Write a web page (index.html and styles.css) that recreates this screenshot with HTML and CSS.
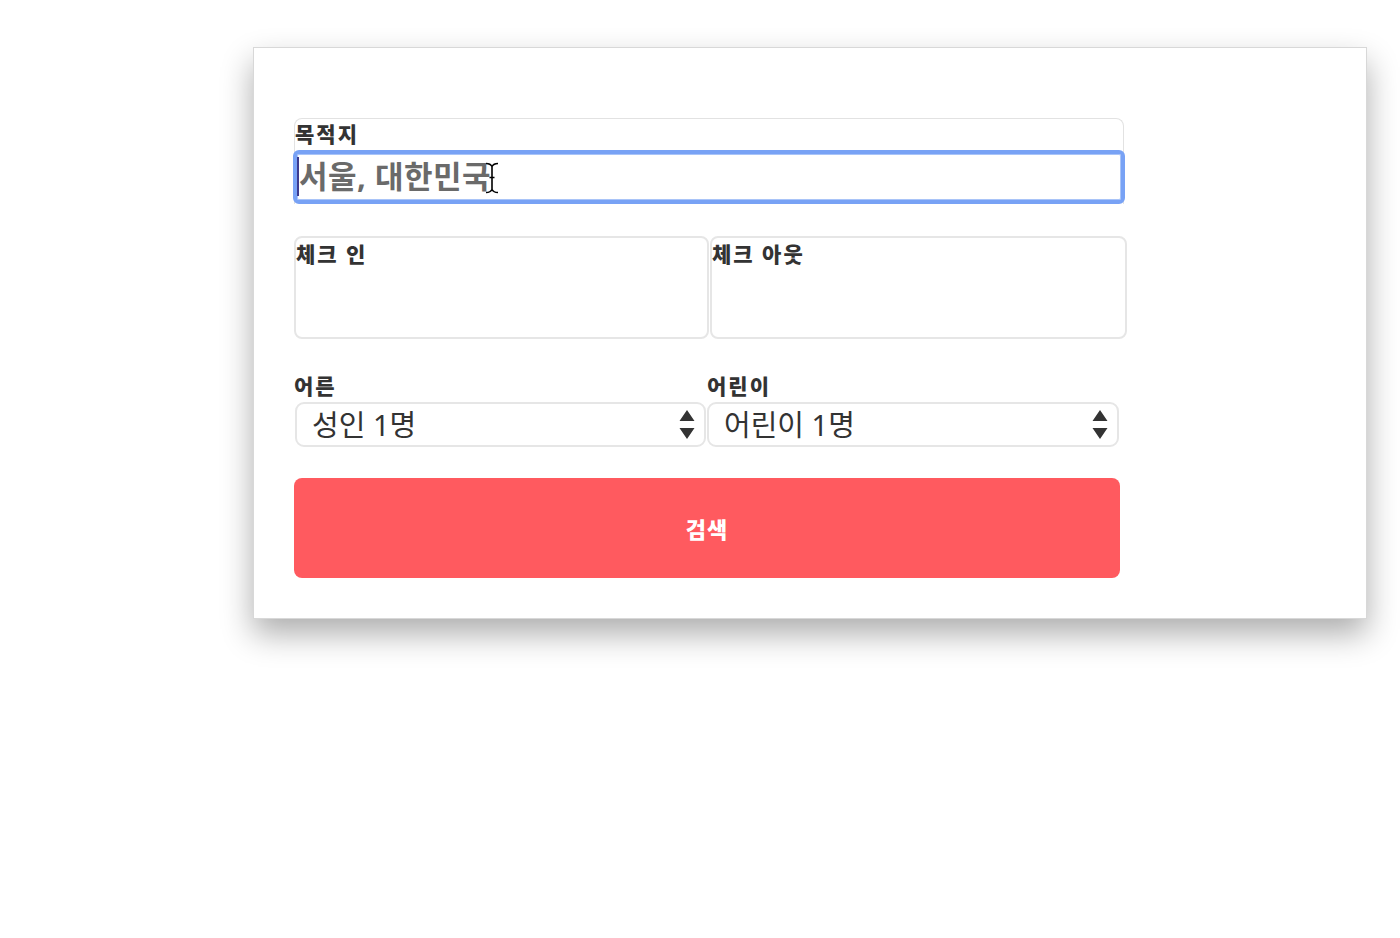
FILE: index.html
```html
<!DOCTYPE html>
<html lang="ko">
<head>
<meta charset="utf-8">
<title>숙소 검색</title>
<link rel="stylesheet" href="styles.css">
</head>
<body>
<div class="card">
  <form class="form">
    <div class="dest">
      <label class="label" for="dest">목적지</label>
      <input id="dest" class="dest-input" type="text" placeholder="서울, 대한민국">
      <span class="caret"></span>
      <svg class="ibeam" width="16" height="32" viewBox="0 0 16 32">
        <path d="M2 1.5 C5 1.5 7 2.5 8 4.5 C9 2.5 11 1.5 14 1.5 M8 4.5 V27.5 M2 30.5 C5 30.5 7 29.5 8 27.5 C9 29.5 11 30.5 14 30.5 M5.5 15.5 H10.5" fill="none" stroke="#000" stroke-width="1.6"/>
      </svg>
    </div>
    <div class="dates">
      <div class="date-box date-in"><span class="label">체크 인</span></div>
      <div class="date-box date-out"><span class="label">체크 아웃</span></div>
    </div>
    <div class="guests">
      <div class="guest guest-adult">
        <span class="label">어른</span>
        <div class="select select-adult">
          <select><option>성인 1명</option></select>
          <svg class="arrows" width="16" height="30" viewBox="0 0 16 30"><path d="M8 0 L15.5 11 H0.5 Z M0.5 18 H15.5 L8 29 Z" fill="#333"/></svg>
        </div>
      </div>
      <div class="guest guest-child">
        <span class="label">어린이</span>
        <div class="select select-child">
          <select><option>어린이 1명</option></select>
          <svg class="arrows" width="16" height="30" viewBox="0 0 16 30"><path d="M8 0 L15.5 11 H0.5 Z M0.5 18 H15.5 L8 29 Z" fill="#333"/></svg>
        </div>
      </div>
    </div>
    <button type="button" class="search">검색</button>
  </form>
</div>
</body>
</html>
```
FILE: styles.css
```css
* { box-sizing: border-box; }
html, body { margin: 0; padding: 0; background: #fff; }
html { min-height: 100%; }
body {
  font-family: "Noto Sans", "Noto Sans CJK KR", sans-serif;
  color: #333;
  padding: 47px 0 120px 253px;
  min-height: 938px;
}
.card {
  width: 1114px;
  background: #fff;
  border: 1px solid #d8d8d8;
  box-shadow: 0 15px 30px rgba(0, 0, 0, 0.32);
  padding: 70px 0 40px 40px;
}
.form { width: 834px; }
.label {
  display: block;
  font-size: 21px;
  font-weight: 900;
  color: #333;
  line-height: 30px;
  letter-spacing: 2px;
}
.dest {
  position: relative;
  width: 830px;
  border: 1px solid #e2e2e2;
  border-bottom: none;
  border-radius: 8px 8px 0 0;
}
.dest .label { height: 31px; line-height: 30px; }
.dest-input {
  display: block;
  width: 832px;
  margin-left: -2px;
  height: 54px;
  border: 4px solid #78a2f5;
  border-radius: 6px;
  box-shadow: inset 0 0 0 1px #a9c4f8;
  outline: none;
  font-family: inherit;
  font-size: 31px;
  font-weight: 700;
  letter-spacing: 0.5px;
  color: #333;
  padding: 0 0 3px 2px;
  background: #fff;
}
.dest-input::placeholder { color: #6a6a6a; opacity: 1; }
.caret {
  position: absolute;
  left: 2px;
  top: 38px;
  width: 2px;
  height: 39px;
  background: #3b3a8f;
}
.ibeam {
  position: absolute;
  left: 189px;
  top: 43px;
}
.dates {
  display: flex;
  gap: 1px;
  margin-top: 32px;
}
.date-box {
  height: 103px;
  border: 2px solid #e6e6e6;
  border-radius: 8px;
  padding: 1px 0 0 0;
}
.date-in { width: 415px; }
.date-out { width: 417px; }
.guests {
  display: flex;
  margin-top: 31px;
}
.guest .label { line-height: 32px; height: 32px; }
.guest-adult { width: 413px; }
.guest-child { width: 412px; }
.select {
  display: flex;
  align-items: center;
  height: 45px;
  border: 2px solid #e6e6e6;
  border-radius: 9px;
  background: #fff;
  padding: 0 9px 0 15px;
}
.select-adult { width: 411px; margin-left: 1px; }
.select-child { width: 412px; }
.select select {
  flex: 1;
  appearance: none;
  -webkit-appearance: none;
  border: none;
  background: transparent;
  font-family: inherit;
  font-size: 29px;
  color: #333;
  padding: 0;
  height: 41px;
  outline: none;
}
.arrows { flex: none; }
.search {
  display: block;
  width: 826px;
  height: 100px;
  margin-top: 31px;
  border: none;
  border-radius: 8px;
  background: #ff5a5f;
  color: #fff;
  font-family: inherit;
  font-size: 22px;
  font-weight: 900;
  letter-spacing: 1px;
}
```
